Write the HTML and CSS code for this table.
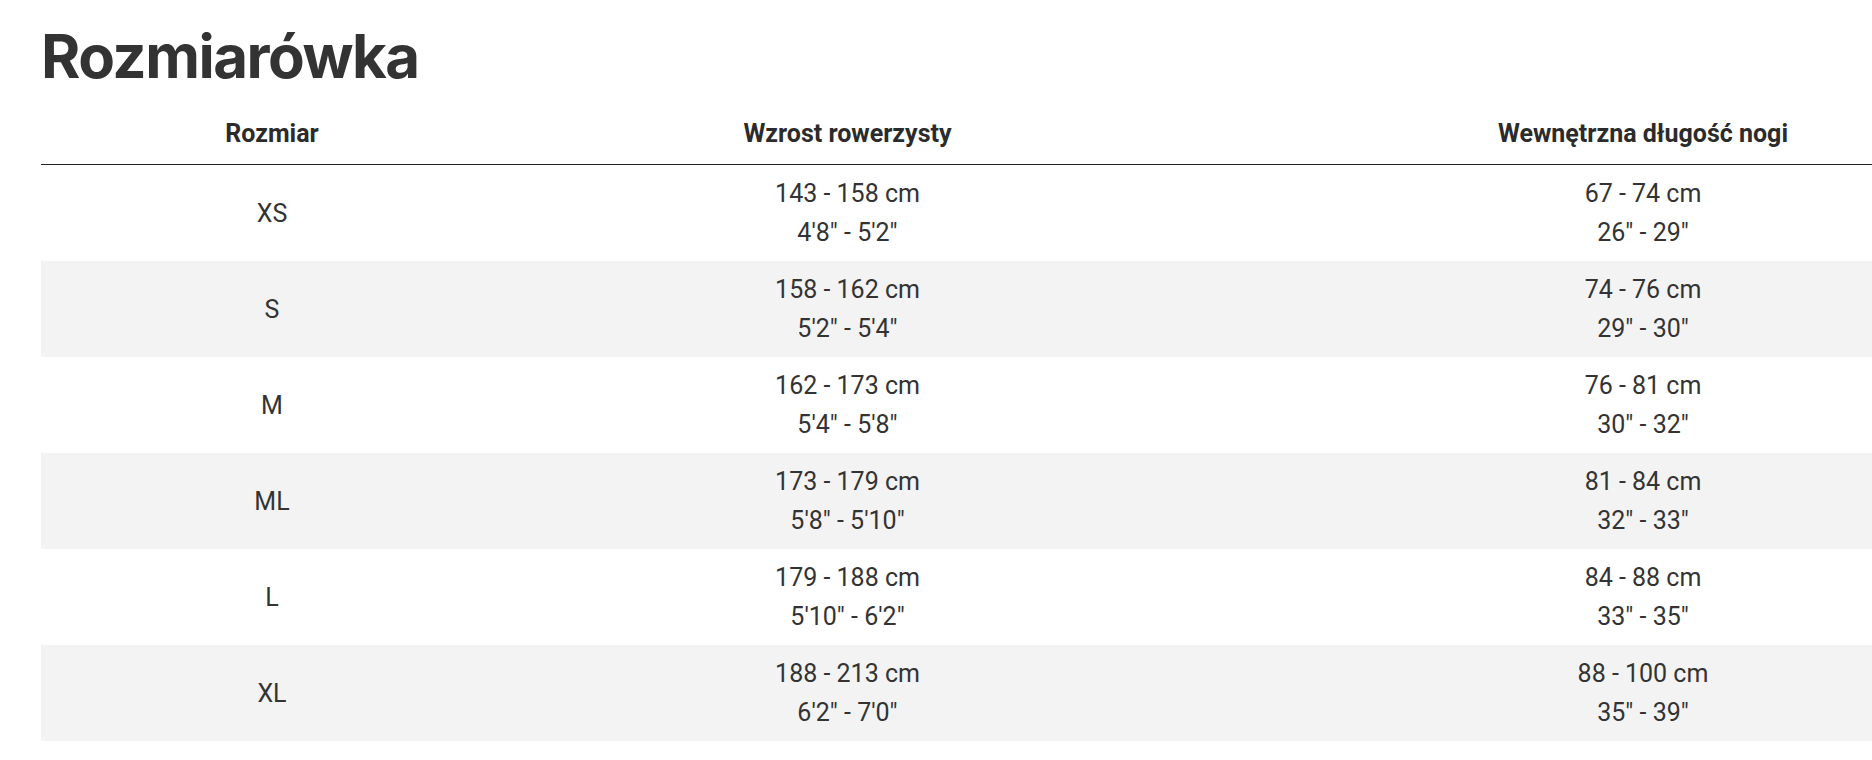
FILE: index.html
```html
<!DOCTYPE html>
<html lang="pl">
<head>
<meta charset="utf-8">
<title>Rozmiarówka</title>
<link rel="stylesheet" href="styles.css">
</head>
<body>
<main class="page">
  <h1 class="title">Rozmiarówka</h1>
  <div class="table-wrap">
    <table class="sizes">
      <colgroup>
        <col class="c1"><col class="c2"><col class="c3">
      </colgroup>
      <thead>
        <tr><th>Rozmiar</th><th>Wzrost rowerzysty</th><th>Wewnętrzna długość nogi</th></tr>
      </thead>
      <tbody>
        <tr><td>XS</td><td>143 - 158 cm<br>4'8" - 5'2"</td><td>67 - 74 cm<br>26" - 29"</td></tr>
        <tr><td>S</td><td>158 - 162 cm<br>5'2" - 5'4"</td><td>74 - 76 cm<br>29" - 30"</td></tr>
        <tr><td>M</td><td>162 - 173 cm<br>5'4" - 5'8"</td><td>76 - 81 cm<br>30" - 32"</td></tr>
        <tr><td>ML</td><td>173 - 179 cm<br>5'8" - 5'10"</td><td>81 - 84 cm<br>32" - 33"</td></tr>
        <tr><td>L</td><td>179 - 188 cm<br>5'10" - 6'2"</td><td>84 - 88 cm<br>33" - 35"</td></tr>
        <tr><td>XL</td><td>188 - 213 cm<br>6'2" - 7'0"</td><td>88 - 100 cm<br>35" - 39"</td></tr>
      </tbody>
    </table>
  </div>
</main>
</body>
</html>
```
FILE: styles.css
```css
html, body {
  margin: 0;
  padding: 0;
  background: #fff;
  overflow: hidden;
}
.page {
  padding: 20px 0 0 41px;
  font-family: Roboto, "Liberation Sans", sans-serif;
  color: #333;
}
.title {
  margin: 0;
  font-family: Inter, "Noto Sans", sans-serif;
  font-weight: 700;
  font-size: 60px;
  line-height: 72px;
  color: #333;
  letter-spacing: -1.5px;
}
.table-wrap {
  overflow: hidden;
}
.sizes {
  border-collapse: collapse;
  table-layout: fixed;
  width: 2053px;
}
.c1 { width: 462px; }
.c2 { width: 689px; }
.c3 { width: 902px; }
.sizes th {
  font-weight: 700;
  font-size: 25px;
  line-height: 30px;
  padding: 27px 0 15px;
  color: #2b2b2b;
  border-bottom: 1px solid #222;
  text-align: center;
}
.sizes td {
  font-size: 25px;
  line-height: 39px;
  padding: 9px 0;
  text-align: center;
  vertical-align: middle;
  color: #333;
}
.sizes tbody tr:nth-child(even) td {
  background: #f3f3f3;
}
```
